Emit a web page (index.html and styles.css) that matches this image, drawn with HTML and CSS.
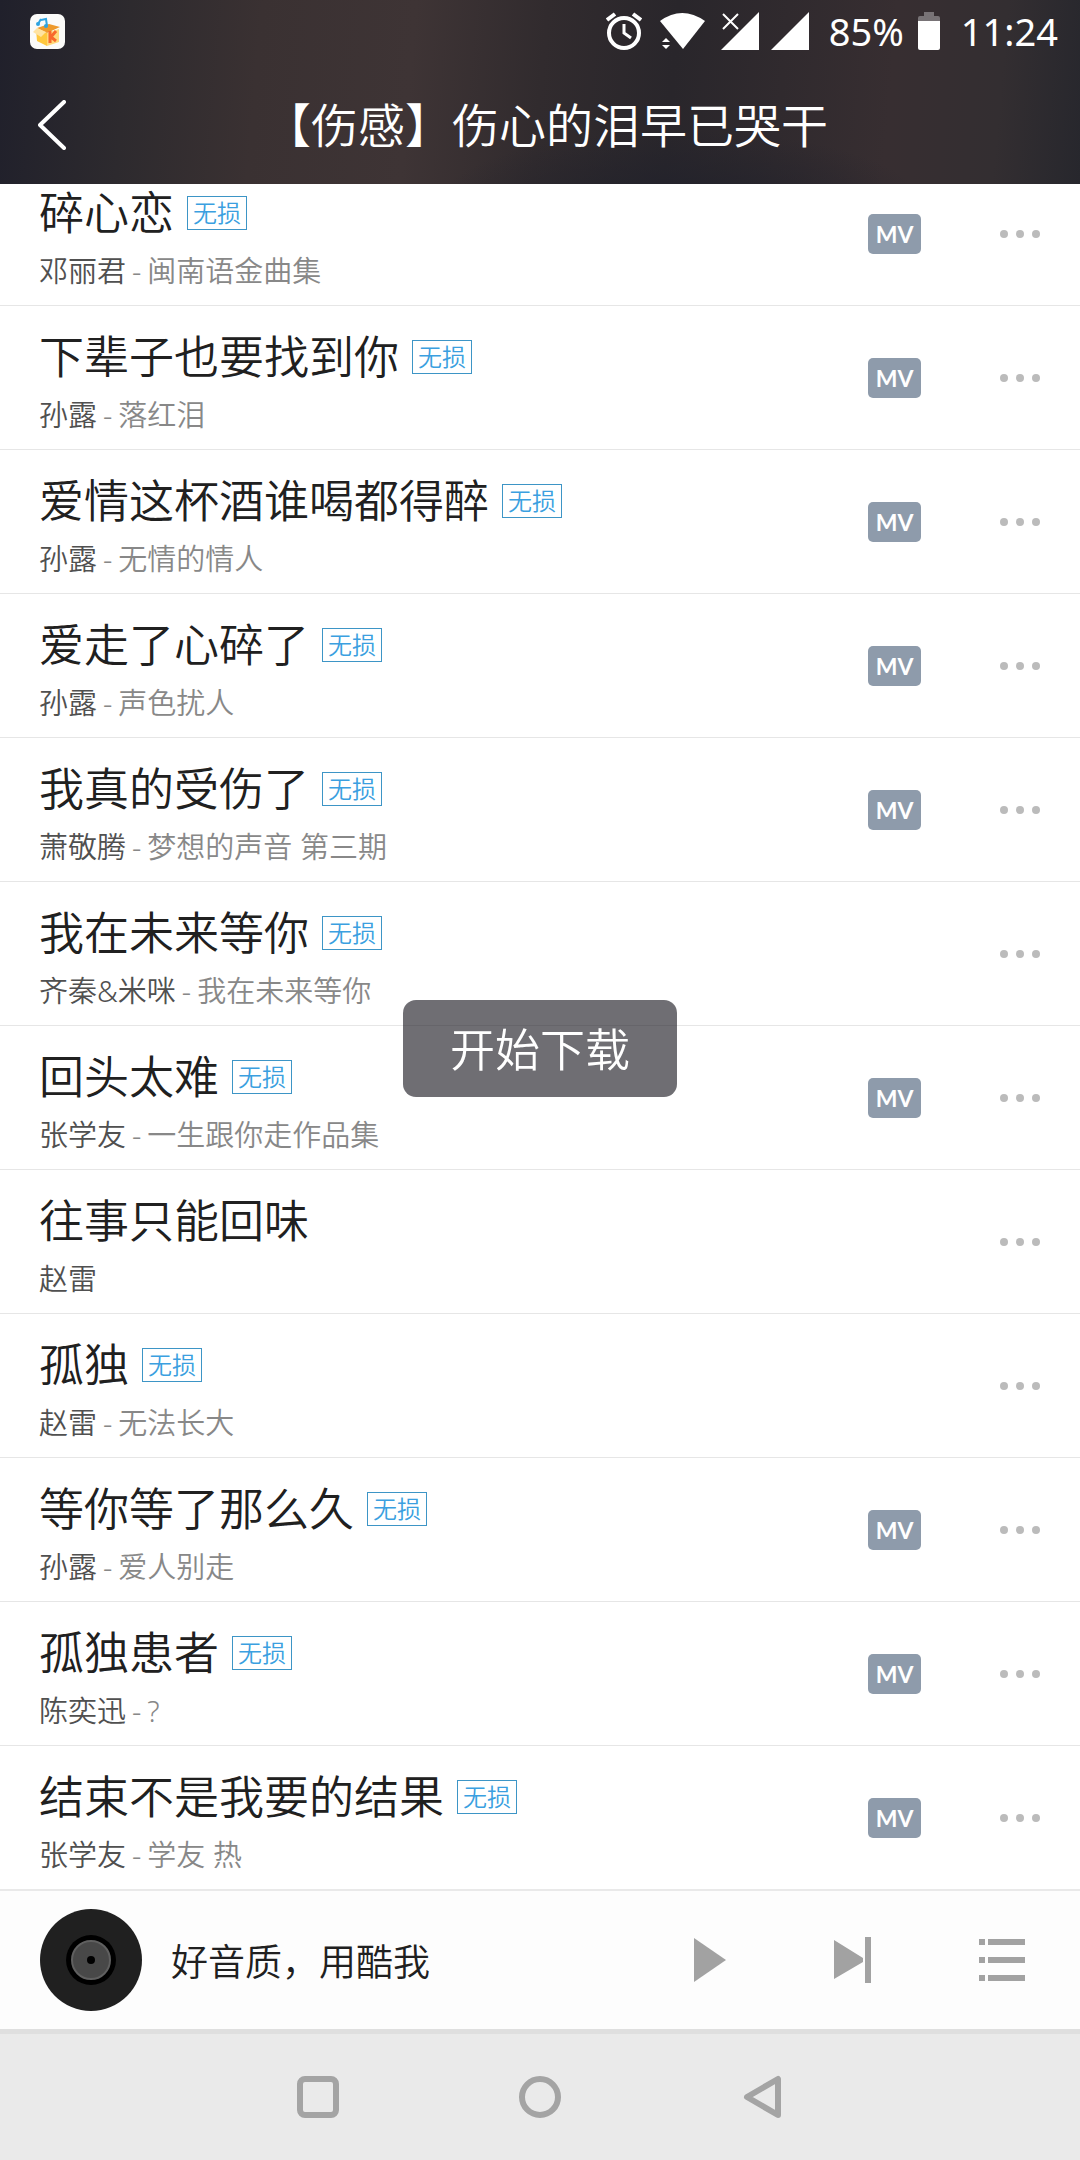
FILE: index.html
```html
<!DOCTYPE html>
<html lang="zh-CN">
<head>
    <meta charset="UTF-8">
    <meta name="viewport" content="width=device-width, initial-scale=1.0">
    <title>【伤感】伤心的泪早已哭干</title>
    <link rel="stylesheet" href="styles.css">
</head>
<body>

    <!-- Status bar and title -->
    <header class="header">
        <div class="status-bar">
            <svg class="app-icon" viewBox="0 0 35 35" aria-hidden="true">
                <rect width="35" height="35" rx="7" fill="#fbfbf9"/>
                <path d="M6 15l11 4v13L7 27z" fill="#ffc83d"/>
                <path d="M17 19l12-4v13l-12 4z" fill="#ffd97a"/>
                <path d="M7 14l12-4 11 3-13 6z" fill="#ee9a2c"/>
                <path d="M3 18l4-4 9 4-5 5z" fill="#ffe3a1"/>
                <path d="M20 17v12M26 17l-5 6 5 4" fill="none" stroke="#f8692c" stroke-width="3"/>
                <path d="M8 10l3-5M17 12l-1-7-5 1" fill="none" stroke="#2fa3e0" stroke-width="2"/>
                <circle cx="8" cy="10" r="2" fill="#2fa3e0"/>
                <circle cx="16" cy="12" r="2" fill="#2fa3e0"/>
            </svg>
            <div class="status-right">
                <svg class="icon-alarm" viewBox="0 0 36 38" aria-hidden="true">
                    <circle cx="18" cy="21" r="15" fill="none" stroke="#fff" stroke-width="4"/>
                    <path d="M18 12v9l7 5" fill="none" stroke="#fff" stroke-width="3"/>
                    <path d="M1 8l8-6M35 8l-8-6" stroke="#fff" stroke-width="4"/>
                </svg>
                <svg class="icon-wifi" viewBox="0 0 45 37" aria-hidden="true">
                    <path d="M0 8Q22 -8 45 8L23 36z" fill="#fff"/>
                    <path d="M2 29l4-4 4 4zM2 32l4 4 4-4z" fill="#fff"/>
                </svg>
                <svg class="icon-signal" viewBox="0 0 38 38" aria-hidden="true">
                    <path d="M0 38L38 0v38z" fill="#fff"/>
                    <path d="M2 2l15 15M17 2L2 17" stroke="#fff" stroke-width="2"/>
                </svg>
                <svg class="icon-signal" viewBox="0 0 38 38" aria-hidden="true">
                    <path d="M0 38L38 0v38z" fill="#fff"/>
                </svg>
                <span class="battery-text">85%</span>
                <svg class="icon-battery" viewBox="0 0 22 38" aria-hidden="true">
                    <path d="M6 0h10v4h4q2 0 2 2v3H0V6q0-2 2-2h4z" fill="#787376"/>
                    <path d="M0 9h22v27q0 2-2 2H2q-2 0-2-2z" fill="#fff"/>
                </svg>
                <span class="clock">11:24</span>
            </div>
        </div>
        <div class="title-bar">
            <button class="back-btn" type="button" aria-label="返回">
                <svg viewBox="0 0 28 50" aria-hidden="true">
                    <path d="M26 2L2 25l24 23" fill="none" stroke="#fff" stroke-width="4" stroke-linecap="round" stroke-linejoin="round"/>
                </svg>
            </button>
            <h1>【伤感】伤心的泪早已哭干</h1>
        </div>
    </header>

    <!-- Song list -->
    <main class="song-list">
        <ul id="songs"></ul>
    </main>

    <!-- Player bar -->
    <section class="player">
        <svg class="disc" viewBox="0 0 103 103" aria-hidden="true">
            <circle cx="51" cy="51" r="51" fill="#202020"/>
            <circle cx="51" cy="51" r="25" fill="#000"/>
            <circle cx="51" cy="51" r="19" fill="#484848" stroke="#606060" stroke-width="2"/>
            <circle cx="51" cy="51" r="4" fill="#000"/>
        </svg>
        <p class="player-text">好音质，用酷我</p>
        <div class="controls">
            <button type="button" aria-label="播放">
                <svg viewBox="0 0 46 46" aria-hidden="true"><path d="M7 1l32 22L7 45z"/></svg>
            </button>
            <button type="button" aria-label="下一首">
                <svg viewBox="0 0 46 46" aria-hidden="true"><path d="M1 3l29 18v4L1 42zM32 0h6v46h-6z"/></svg>
            </button>
            <button type="button" aria-label="播放列表">
                <svg viewBox="0 0 46 46" aria-hidden="true"><path d="M0 2h6v6H0zM9 2h37v6H9zM0 20h6v6H0zM9 20h37v6H9zM0 38h6v6H0zM9 38h37v6H9z"/></svg>
            </button>
        </div>
    </section>

    <!-- System navigation -->
    <nav class="nav-bar">
        <button type="button" aria-label="最近任务">
            <svg viewBox="0 0 44 44" aria-hidden="true"><rect x="4" y="4" width="36" height="36" rx="5"/></svg>
        </button>
        <button type="button" aria-label="主页">
            <svg viewBox="0 0 44 44" aria-hidden="true"><circle cx="22" cy="22" r="18"/></svg>
        </button>
        <button type="button" aria-label="后退">
            <svg viewBox="0 0 44 44" aria-hidden="true"><path d="M38 4v36L7 22z"/></svg>
        </button>
    </nav>

    <div class="toast" role="status">开始下载</div>

    <script src="script.js"></script>

</body>
</html>
```
FILE: styles.css
```css
/* General styles */
* {
    box-sizing: border-box;
}

body {
    margin: 0;
    height: 100vh;
    display: flex;
    flex-direction: column;
    background: #fff;
    color: #202020;
    font-family: "Noto Sans", "Noto Sans CJK SC", sans-serif;
    font-weight: 350;
}

button {
    padding: 0;
    border: none;
    background: none;
    cursor: pointer;
}

svg {
    display: block;
}

/* Header */
.header {
    flex: none;
    background:
        radial-gradient(ellipse at 63% 110%, #22222b 0, rgba(34, 34, 43, 0) 25%),
        linear-gradient(95deg, #20202b 0, #2d2a2e 12%, #3a3132 24%, #3e3435 38%, #312b2e 50%, #29262b 62%, #372e31 82%, #332e31 92%, #27272d 100%);
    color: #fff;
}

.status-bar {
    display: flex;
    justify-content: space-between;
    align-items: center;
    height: 62px;
    padding: 0 22px 0 30px;
}

.app-icon {
    width: 35px;
    height: 35px;
}

.status-right {
    display: flex;
    align-items: center;
    font-size: 38px;
    font-weight: 400;
    line-height: 62px;
}

.icon-alarm {
    width: 36px;
    height: 38px;
    margin-right: 18px;
}

.icon-wifi {
    width: 45px;
    height: 37px;
    margin-right: 16px;
}

.icon-signal {
    width: 38px;
    height: 38px;
    margin-right: 12px;
}

.battery-text {
    margin-left: 8px;
}

.icon-battery {
    width: 22px;
    height: 38px;
    margin: 0 21px 0 14px;
}

.title-bar {
    position: relative;
    display: flex;
    align-items: center;
    justify-content: center;
    height: 122px;
    padding: 4px 0 0 12px;
}

.title-bar h1 {
    margin: 0;
    font-size: 47px;
    font-weight: 350;
    line-height: 64px;
}

.back-btn {
    position: absolute;
    left: 38px;
    top: 38px;
}

.back-btn svg {
    width: 28px;
    height: 50px;
}

/* Song list, scrolled to the end */
.song-list {
    flex: 1;
    min-height: 0;
    display: flex;
    flex-direction: column;
    justify-content: flex-end;
    overflow: hidden;
}

.song-list ul {
    margin: 0;
    padding: 0;
    list-style: none;
}

.song {
    display: flex;
    align-items: center;
    height: 144px;
    padding: 0 36px 0 39px;
    border-bottom: 1px solid #e6e6e6;
}

.song:last-child {
    height: 143px;
    border-bottom: none;
}

.song-info {
    flex: 1;
    padding-top: 10px;
}

.song-name {
    display: flex;
    align-items: center;
    gap: 13px;
    margin: 0;
    font-size: 45px;
    font-weight: 350;
    line-height: 64px;
}

.lossless {
    width: 60px;
    height: 34px;
    border: 1px solid #3d95c6;
    color: #3b9fe0;
    font-size: 24px;
    line-height: 32px;
    text-align: center;
}

.song-detail {
    display: flex;
    gap: 6px;
    margin: 0;
    color: #888;
    font-size: 29px;
    line-height: 52px;
}

.singer {
    color: #505050;
}

.mv-btn {
    width: 53px;
    height: 40px;
    border-radius: 5px;
    background: #8e9bab;
    color: #fff;
    font-family: Lato, sans-serif;
    font-size: 23px;
    font-weight: 700;
    line-height: 40px;
}

.more-btn {
    margin-left: 75px;
}

.more-btn svg {
    width: 48px;
    height: 48px;
    fill: #bbb;
}

/* Player bar */
.player {
    flex: none;
    display: flex;
    align-items: center;
    height: 140px;
    padding: 0 55px 0 40px;
    border-top: 2px solid #e9e9e9;
    background: #fdfdfd;
}

.disc {
    width: 103px;
    height: 103px;
}

.player-text {
    flex: 1;
    margin: 0 0 0 28px;
    font-size: 37px;
}

.controls {
    display: flex;
    gap: 100px;
}

.controls svg {
    width: 46px;
    height: 46px;
    fill: #a2a2a2;
}

/* System navigation */
.nav-bar {
    flex: none;
    display: flex;
    justify-content: center;
    align-items: center;
    gap: 178px;
    height: 131px;
    border-top: 5px solid #dfdfdf;
    background: #eaeaea;
}

.nav-bar svg {
    width: 44px;
    height: 44px;
    fill: none;
    stroke: #a4a4a4;
    stroke-width: 6;
    stroke-linejoin: round;
}

/* Toast */
.toast {
    position: fixed;
    top: 1000px;
    left: 50%;
    transform: translateX(-50%);
    padding: 18px 47px 15px;
    border-radius: 13px;
    background: rgba(27, 26, 33, 0.63);
    color: #fff;
    font-size: 45px;
    line-height: 64px;
    white-space: nowrap;
}
```
FILE: script.js
```js
const songs = [
    { name: "碎心恋", singer: "邓丽君", album: "闽南语金曲集", lossless: true, mv: true },
    { name: "下辈子也要找到你", singer: "孙露", album: "落红泪", lossless: true, mv: true },
    { name: "爱情这杯酒谁喝都得醉", singer: "孙露", album: "无情的情人", lossless: true, mv: true },
    { name: "爱走了心碎了", singer: "孙露", album: "声色扰人", lossless: true, mv: true },
    { name: "我真的受伤了", singer: "萧敬腾", album: "梦想的声音 第三期", lossless: true, mv: true },
    { name: "我在未来等你", singer: "齐秦&amp;米咪", album: "我在未来等你", lossless: true, mv: false },
    { name: "回头太难", singer: "张学友", album: "一生跟你走作品集", lossless: true, mv: true },
    { name: "往事只能回味", singer: "赵雷", album: "", lossless: false, mv: false },
    { name: "孤独", singer: "赵雷", album: "无法长大", lossless: true, mv: false },
    { name: "等你等了那么久", singer: "孙露", album: "爱人别走", lossless: true, mv: true },
    { name: "孤独患者", singer: "陈奕迅", album: "?", lossless: true, mv: true },
    { name: "结束不是我要的结果", singer: "张学友", album: "学友 热", lossless: true, mv: true }
];

// Build one row per song
document.getElementById("songs").innerHTML = songs.map(song => `
    <li class="song">
        <div class="song-info">
            <h2 class="song-name">${song.name}${song.lossless ? '<span class="lossless">无损</span>' : ""}</h2>
            <p class="song-detail">
                <span class="singer">${song.singer}</span>
                ${song.album ? `<span>-</span> <span>${song.album}</span>` : ""}
            </p>
        </div>
        ${song.mv ? '<button class="mv-btn" type="button">MV</button>' : ""}
        <button class="more-btn" type="button" aria-label="更多">
            <svg viewBox="0 0 48 48" aria-hidden="true">
                <circle cx="8" cy="24" r="4"/>
                <circle cx="24" cy="24" r="4"/>
                <circle cx="40" cy="24" r="4"/>
            </svg>
        </button>
    </li>`).join("");
```
